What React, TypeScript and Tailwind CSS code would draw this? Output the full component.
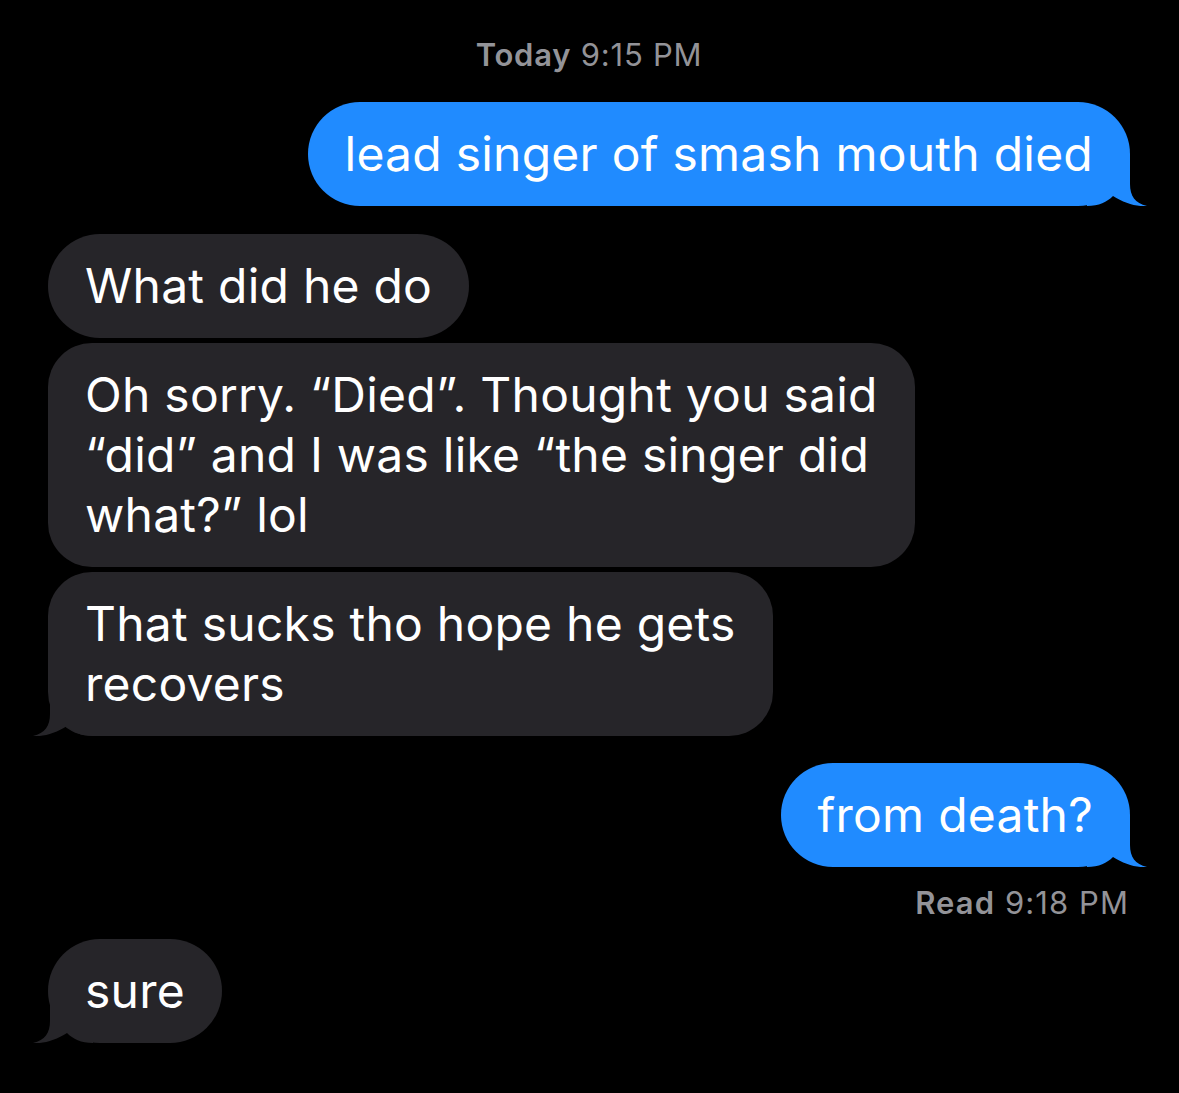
type Side = 'me' | 'them';

function Tail({ side }: { side: Side }) {
  const cls =
    side === 'me'
      ? 'absolute bottom-0 right-[-17px] fill-[#208bff]'
      : 'absolute bottom-0 left-[-15px] -scale-x-100 fill-[#262529]';
  return (
    <svg width="60" height="52" viewBox="0 0 60 52" className={cls}>
      <path d="M0 52 L0 0 L43 0 L43 30 C43 42 48 49 60 52 C50 53 37 49 26 42 C20 48 12 52 0 52 Z" />
    </svg>
  );
}

function Bubble({
  side,
  tail = false,
  multi = false,
  className = '',
  children,
}: {
  side: Side;
  tail?: boolean;
  multi?: boolean;
  className?: string;
  children: React.ReactNode;
}) {
  const color = side === 'me' ? 'bg-[#208bff] self-end' : 'bg-[#262529] self-start';
  const radius = multi ? 'rounded-[44px]' : 'rounded-[52px]';
  return (
    <div className={`relative ${color} ${radius} px-[37px] py-[22px] ${className}`}>
      <div className="relative z-10 whitespace-nowrap text-[48px] leading-[60px] tracking-[0.005em] text-white">
        {children}
      </div>
      {tail && <Tail side={side} />}
    </div>
  );
}

export default function App() {
  return (
    <div className="min-h-screen w-full bg-black pl-[48px] pr-[49px] pt-[37px] pb-[52px] flex flex-col font-[Inter,'Liberation_Sans',sans-serif]">
      <div className="text-center text-[31px] leading-[36px] tracking-[0.025em] text-[#939398]">
        <span className="font-semibold">Today</span> 9:15 PM
      </div>

      <Bubble side="me" tail className="mt-[29px]">
        lead singer of smash mouth died
      </Bubble>

      <div className="mt-[28px] flex flex-col gap-[5px]">
        <Bubble side="them">What did he do</Bubble>
        <Bubble side="them" multi>
          Oh sorry. “Died”. Thought you said
          <br />
          “did” and I was like “the singer did
          <br />
          what?” lol
        </Bubble>
        <Bubble side="them" multi tail>
          That sucks tho hope he gets
          <br />
          recovers
        </Bubble>
      </div>

      <Bubble side="me" tail className="mt-[27px]">
        from death?
      </Bubble>

      <div className="mt-[18px] text-right text-[31px] leading-[36px] tracking-[0.035em] text-[#939398] pr-px">
        <span className="font-semibold">Read</span> 9:18 PM
      </div>

      <Bubble side="them" tail className="mt-[18px]">
        sure
      </Bubble>
    </div>
  );
}
